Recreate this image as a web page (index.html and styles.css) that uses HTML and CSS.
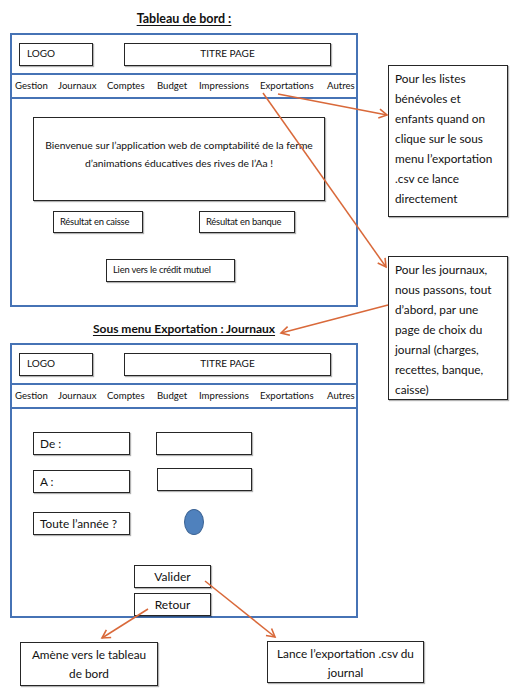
FILE: index.html
```html
<!DOCTYPE html>
<html lang="fr">
<head>
<meta charset="utf-8">
<title>Maquette</title>
<link rel="stylesheet" href="styles.css">
</head>
<body>
<div class="page">
  <div class="left">
    <h2 class="title t1"><span>Tableau de bord :</span></h2>
    <div class="frame">
      <div class="hdr">
        <div class="box logo">LOGO</div>
        <div class="box titre">TITRE PAGE</div>
      </div>
      <nav class="nav">
        <span>Gestion</span><span>Journaux</span><span>Comptes</span><span>Budget</span><span>Impressions</span><span>Exportations</span><span>Autres</span>
      </nav>
      <div class="body1">
        <div class="box welcome">Bienvenue sur l’application web de comptabilité de la ferme<br>d’animations éducatives des rives de l’Aa !</div>
        <div class="results">
          <div class="box res res1">Résultat en caisse</div>
          <div class="box res res2">Résultat en banque</div>
        </div>
        <div class="box res lien">Lien vers le crédit mutuel</div>
      </div>
    </div>
    <h2 class="title t2"><span>Sous menu Exportation : Journaux</span></h2>
    <div class="frame">
      <div class="hdr">
        <div class="box logo">LOGO</div>
        <div class="box titre">TITRE PAGE</div>
      </div>
      <nav class="nav">
        <span>Gestion</span><span>Journaux</span><span>Comptes</span><span>Budget</span><span>Impressions</span><span>Exportations</span><span>Autres</span>
      </nav>
      <div class="body2">
        <div class="form">
          <div class="box lbl">De :</div>
          <div class="box field"></div>
          <div class="box lbl r2">A :</div>
          <div class="box field f2"></div>
          <div class="box lbl r3">Toute l’année ?</div>
          <div class="dot"></div>
        </div>
        <div class="box btn valider">Valider</div>
        <div class="box btn retour">Retour</div>
      </div>
    </div>
  </div>
  <div class="right">
    <div class="box note n1">Pour les listes<br>bénévoles et<br>enfants quand on<br>clique sur le sous<br>menu l’exportation<br>.csv ce lance<br>directement</div>
    <div class="box note n2">Pour les journaux,<br>nous passons, tout<br>d’abord, par une<br>page de choix du<br>journal (charges,<br>recettes, banque,<br>caisse)</div>
  </div>
  <div class="bottom">
    <div class="box outcome amene">Amène vers le tableau<br>de bord</div>
    <div class="box outcome lance">Lance l’exportation .csv du<br>journal</div>
  </div>
  <svg class="arrows" width="513" height="692" viewBox="0 0 513 692" aria-hidden="true">
    <defs>
      <marker id="ah" markerWidth="12" markerHeight="12" refX="9" refY="6" orient="auto" markerUnits="userSpaceOnUse">
        <path d="M1,1.5 L9,6 L1,10.5" fill="none" stroke="#d9693a" stroke-width="1.6"/>
      </marker>
    </defs>
    <g stroke="#d9693a" stroke-width="1.5" fill="none">
      <line x1="278" y1="94" x2="387" y2="115" marker-end="url(#ah)"/>
      <line x1="263" y1="93" x2="386" y2="267" marker-end="url(#ah)"/>
      <line x1="388" y1="305" x2="281" y2="333" marker-end="url(#ah)"/>
      <line x1="148" y1="609" x2="102" y2="638" marker-end="url(#ah)"/>
      <line x1="205" y1="581" x2="275" y2="637" marker-end="url(#ah)"/>
    </g>
  </svg>
</div>
</body>
</html>
```

FILE: styles.css
```css
* { box-sizing: border-box; }
html, body { margin: 0; padding: 0; background: #fff; }
body { font-family: Lato, "Open Sans", sans-serif; color: #111; }

.page {
  position: relative;
  width: 513px;
  height: 692px;
  display: grid;
  grid-template-columns: 348px 120px;
  column-gap: 30px;
  padding-left: 10px;
  align-content: start;
  overflow: hidden;
}
.left { grid-column: 1; grid-row: 1; }
.right { grid-column: 2; grid-row: 1; padding-top: 65px; }
.bottom { grid-column: 1 / 3; grid-row: 2; display: flex; align-items: flex-start; }

.title {
  margin: 0;
  font-size: 12.5px;
  font-weight: 700;
  line-height: 20px;
  height: 20px;
  text-align: center;
}
.title span { text-decoration: underline; text-underline-offset: 2px; }
.t1 { margin-top: 9px; margin-bottom: 4px; }
.t2 { margin-top: 12px; margin-bottom: 4px; font-size: 12px; }

.frame { border: 2px solid #4673b5; }

.box {
  border: 1px solid #262626;
  box-shadow: 1px 1px 1px rgba(0, 0, 0, 0.3);
  background: #fff;
}

.hdr {
  display: flex;
  gap: 31px;
  padding: 8px 0 7px 7px;
  border-bottom: 2px solid #4673b5;
}
.logo {
  width: 74px;
  height: 23px;
  padding-left: 7px;
  font-size: 10px;
  line-height: 19px;
}
.titre {
  width: 207px;
  height: 23px;
  text-align: center;
  font-size: 10px;
  line-height: 19px;
}

.nav {
  display: grid;
  grid-template-columns: 43px 49px 50px 42px 61px 67px auto;
  padding-left: 3px;
  height: 24px;
  border-bottom: 2px solid #4673b5;
  font-size: 9.6px;
  line-height: 22px;
  white-space: nowrap;
}

.body1 { padding: 18px 0 23px 0; }
.welcome {
  margin-left: 21px;
  width: 292px;
  height: 84px;
  padding-top: 18px;
  text-align: center;
  font-size: 10.3px;
  line-height: 18px;
  white-space: nowrap;
}
.results { display: flex; margin: 10px 0 0 41px; }
.res {
  height: 22px;
  padding-left: 6px;
  font-size: 9.4px;
  line-height: 20px;
  letter-spacing: -0.2px;
  white-space: nowrap;
}
.res1 { width: 90px; }
.res2 { width: 96px; margin-left: 56px; }
.lien { width: 129px; height: 23px; margin: 26px 0 0 94px; line-height: 19px; }

.body2 { padding-top: 23px; }
.form {
  display: grid;
  grid-template-columns: 97px 96px;
  column-gap: 26px;
  margin-left: 21px;
}
.lbl {
  height: 23px;
  padding-left: 6px;
  font-size: 11.8px;
  line-height: 21px;
  white-space: nowrap;
}
.field { height: 23px; }
.r2 { margin-top: 15px; }
.f2 { margin: 13px 0 2px 1px; }
.r3 { margin-top: 19px; }
.dot {
  width: 20px;
  height: 26px;
  margin: 16px 0 -3px 28px;
  border-radius: 50%;
  background: #4f81bd;
  border: 1px solid #3b6394;
}
.btn {
  width: 77px;
  height: 23px;
  margin-left: 122px;
  text-align: center;
  font-size: 12px;
  line-height: 21px;
}
.valider { margin-top: 30px; }
.retour { margin-top: 5px; }

.note {
  width: 120px;
  padding: 3px 0 0 6px;
  font-size: 11.8px;
  line-height: 20px;
  white-space: nowrap;
}
.n1 { height: 152px; }
.n2 { height: 144px; margin-top: 39px; }

.outcome {
  padding-top: 2px;
  text-align: center;
  font-size: 11.8px;
  line-height: 19px;
  white-space: nowrap;
}
.amene { width: 138px; height: 44px; margin: 24px 0 0 10px; }
.lance { width: 157px; height: 42px; margin: 23px 0 0 109px; }

.arrows { position: absolute; top: 0; left: 0; pointer-events: none; }
```
